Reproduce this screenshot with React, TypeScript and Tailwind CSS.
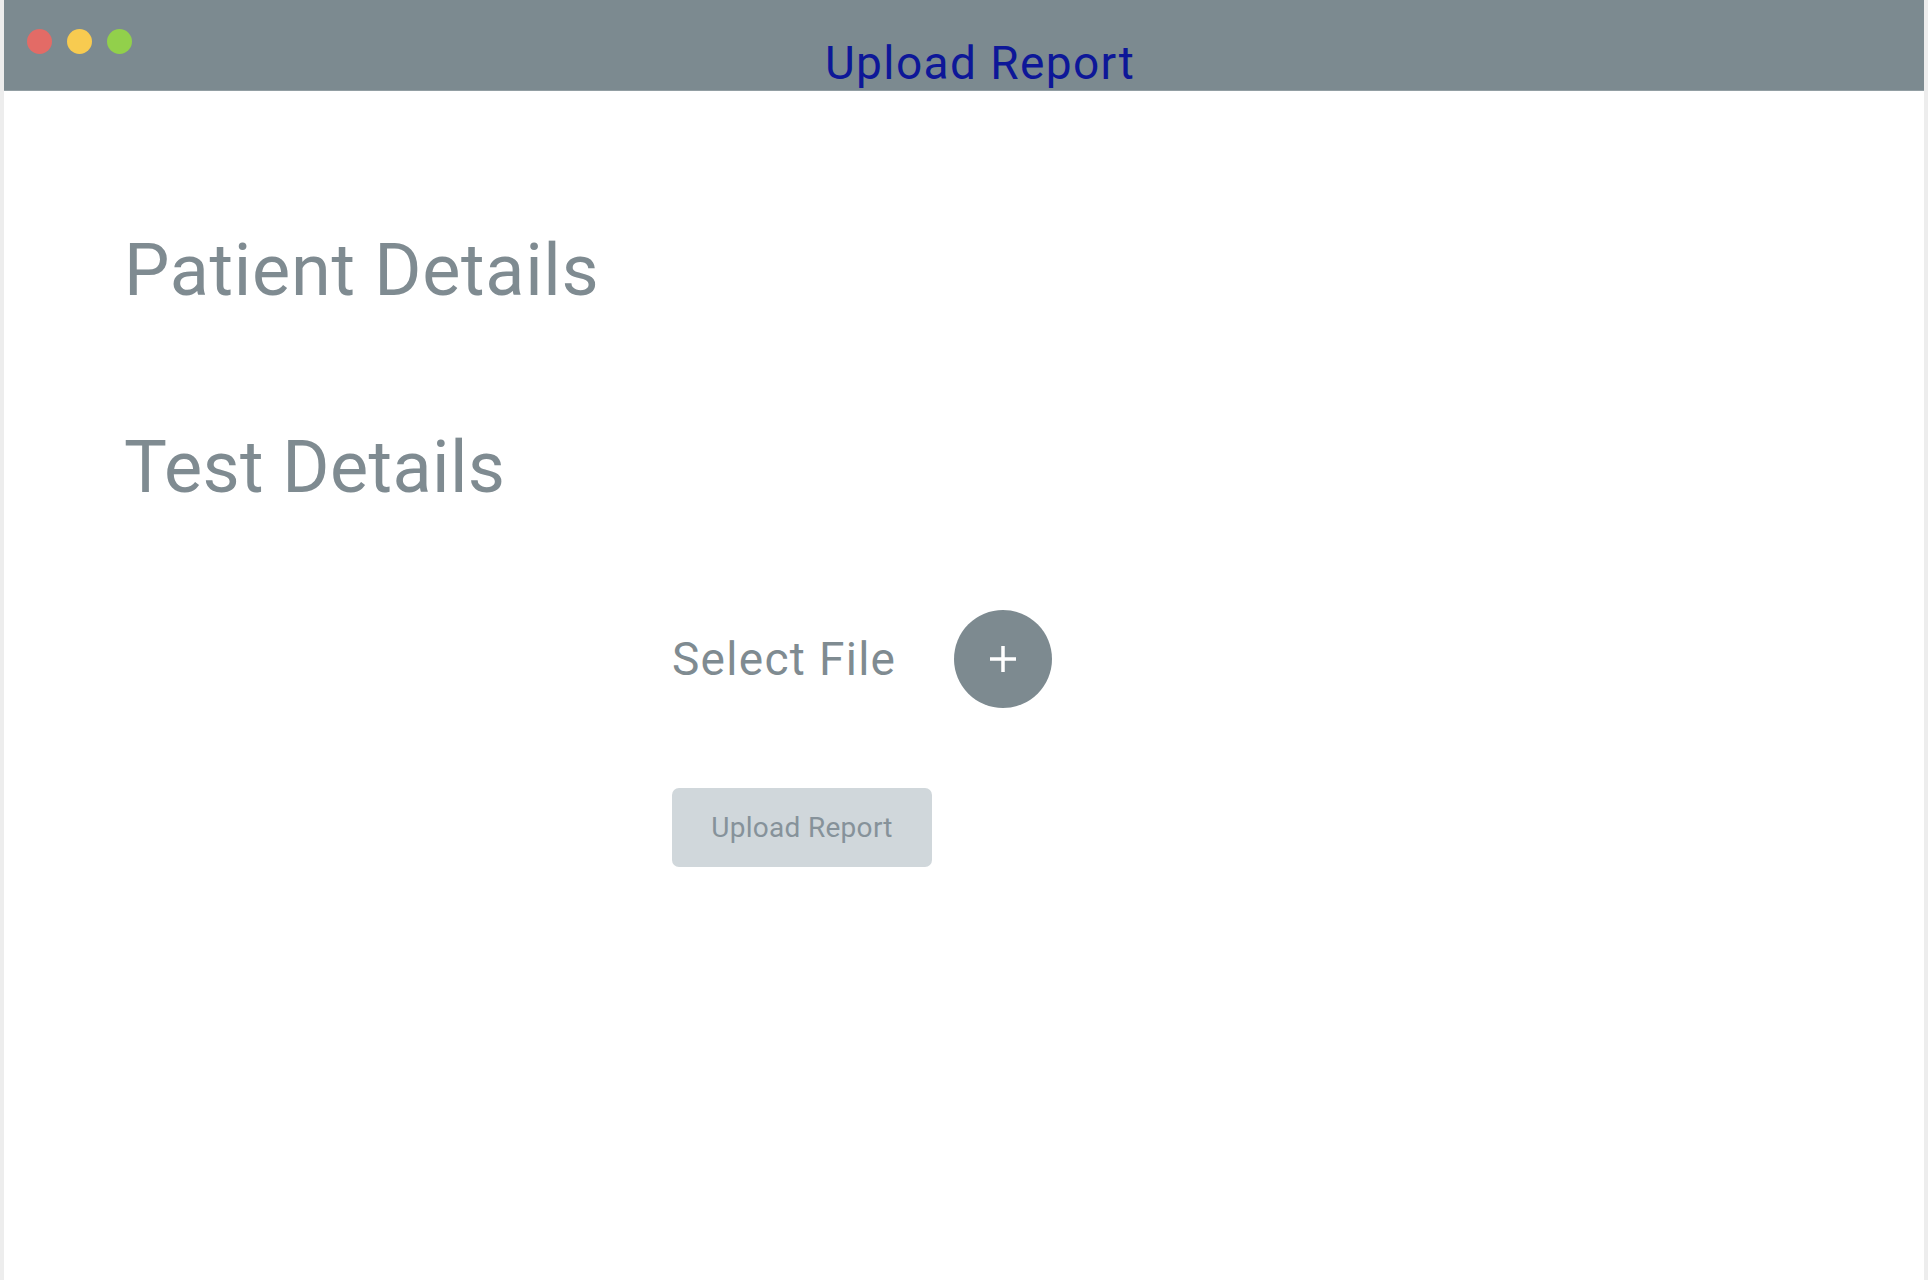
export default function App() {
  return (
    <div
      className="h-[1280px] w-full bg-[#ededed] px-[4px]"
      style={{ fontFamily: "Roboto, 'Noto Sans', sans-serif" }}
    >
      <div className="flex h-full flex-col bg-white">
        {/* title bar */}
        <div className="grid h-[91px] grid-cols-[1fr_auto_1fr] border-b border-[#929ea3] bg-[#7c8a90]">
          <div className="flex gap-[15px] pl-[23px] pt-[29px]">
            <span className="h-[25px] w-[25px] rounded-full bg-[#e36b66]" />
            <span className="h-[25px] w-[25px] rounded-full bg-[#f8cb50]" />
            <span className="h-[25px] w-[25px] rounded-full bg-[#92d04b]" />
          </div>
          <h1 className="pl-[32px] pt-[40px] text-[46px] leading-none tracking-[1.4px] text-[#0d1798]">
            Upload Report
          </h1>
          <div />
        </div>

        <div className="flex flex-col pl-[120px] pt-[144px] text-[#7f8b91]">
          <h2 className="text-[72px] leading-none tracking-[0.7px]">Patient Details</h2>
          <h2 className="mt-[125px] text-[72px] leading-none tracking-[0.4px]">Test Details</h2>

          <div className="ml-[548px] mt-[106px] flex flex-col items-start">
            <div className="flex items-center gap-[58px]">
              <span className="text-[46px] leading-none tracking-[1.3px]">Select File</span>
              <button className="flex h-[98px] w-[98px] items-center justify-center rounded-full bg-[#7d8a90]">
                <svg width="30" height="30" viewBox="0 0 30 30">
                  <path d="M15 2v26M2 15h26" stroke="white" strokeWidth="3.5" />
                </svg>
              </button>
            </div>
            <button className="mt-[80px] flex h-[79px] w-[260px] items-center justify-center rounded-[7px] bg-[#d0d7db] text-[28px] tracking-[0.3px] text-[#86929a]">
              Upload Report
            </button>
          </div>
        </div>
      </div>
    </div>
  )
}
